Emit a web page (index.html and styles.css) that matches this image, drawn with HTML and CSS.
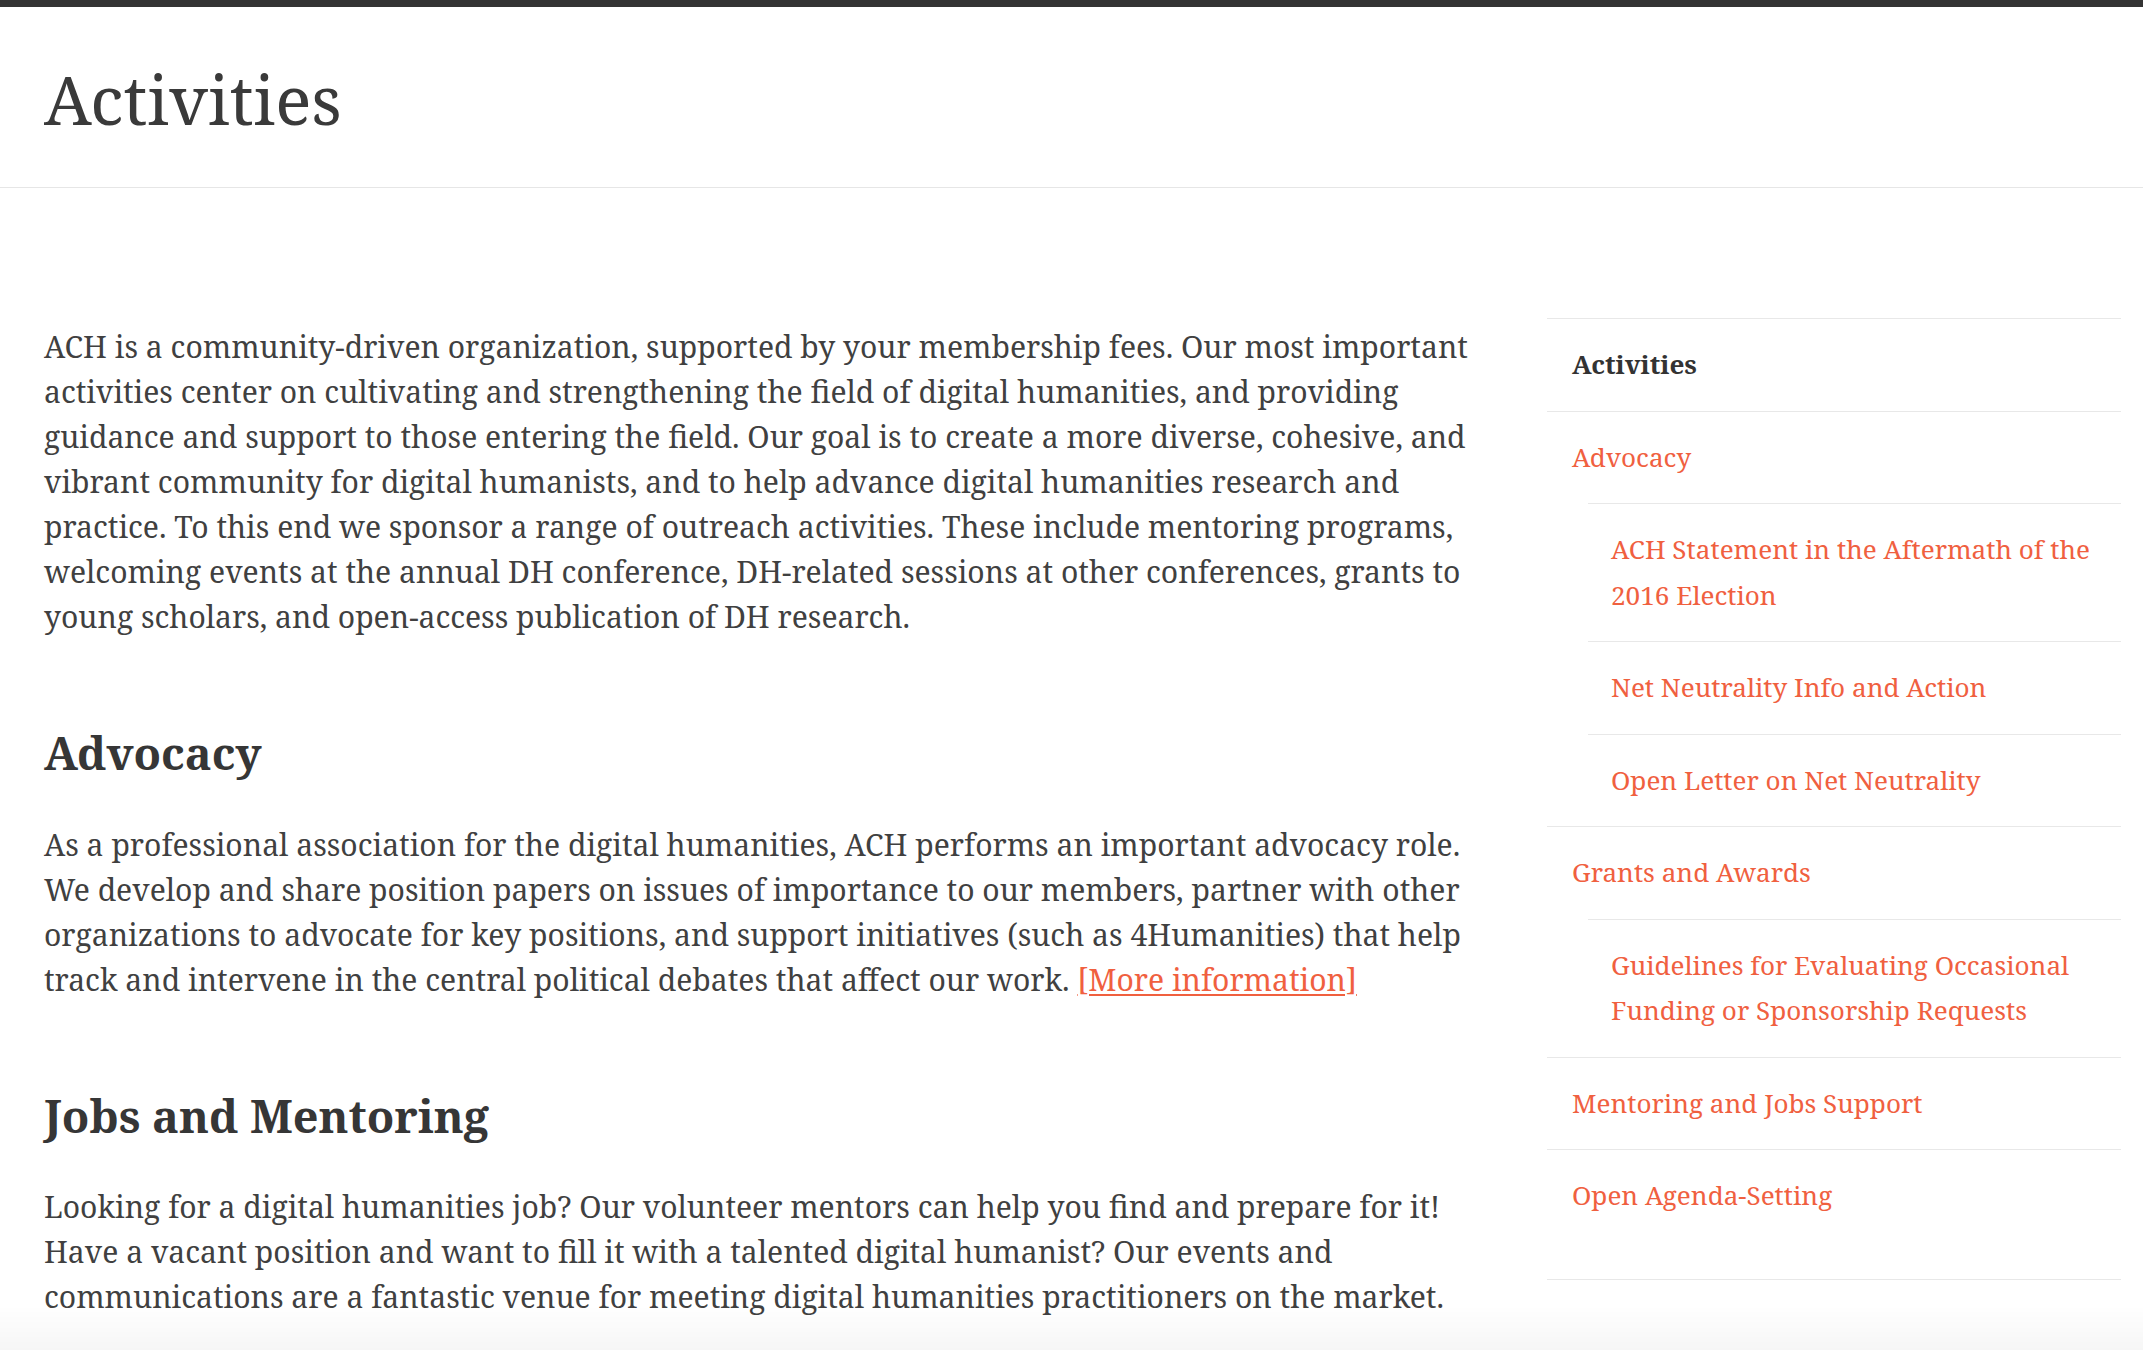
FILE: index.html
```html
<!DOCTYPE html>
<html lang="en">
<head>
<meta charset="utf-8">
<title>Activities</title>
<link rel="stylesheet" href="styles.css">
</head>
<body>
<div class="topbar"></div>
<header class="page-header">
  <h1 class="page-title">Activities</h1>
</header>
<div class="layout">
  <main class="content">
    <p>ACH is a community-driven organization, supported by your membership fees. Our most important activities center on cultivating and strengthening the field of digital humanities, and providing guidance and support to those entering the field. Our goal is to create a more diverse, cohesive, and vibrant community for digital humanists, and to help advance digital humanities research and practice. To this end we sponsor a range of outreach activities. These include mentoring programs, welcoming events at the annual DH conference, DH-related sessions at other conferences, grants to young scholars, and open-access publication of DH research.</p>
    <h2>Advocacy</h2>
    <p>As a professional association for the digital humanities, ACH performs an important advocacy role. We develop and share position papers on issues of importance to our members, partner with other organizations to advocate for key positions, and support initiatives (such as 4Humanities) that help track and intervene in the central political debates that affect our work. <a class="inline-link" href="#">[More information]</a></p>
    <h2>Jobs and Mentoring</h2>
    <p>Looking for a digital humanities job? Our volunteer mentors can help you find and prepare for it! Have a vacant position and want to fill it with a talented digital humanist? Our events and communications are a fantastic venue for meeting digital humanities practitioners on the market.</p>
  </main>
  <aside class="sidebar">
    <nav class="widget">
      <ul class="menu">
        <li class="menu-title">Activities</li>
        <li><a href="#">Advocacy</a>
          <ul class="submenu">
            <li><a href="#">ACH Statement in the Aftermath of the 2016 Election</a></li>
            <li><a href="#">Net Neutrality Info and Action</a></li>
            <li><a href="#">Open Letter on Net Neutrality</a></li>
          </ul>
        </li>
        <li><a href="#">Grants and Awards</a>
          <ul class="submenu">
            <li><a href="#">Guidelines for Evaluating Occasional Funding or Sponsorship Requests</a></li>
          </ul>
        </li>
        <li><a href="#">Mentoring and Jobs Support</a></li>
        <li><a href="#">Open Agenda-Setting</a></li>
      </ul>
    </nav>
  </aside>
</div>
<div class="bottom-fade"></div>
</body>
</html>
```
FILE: styles.css
```css
html, body {
  margin: 0;
  padding: 0;
  background: #ffffff;
}
body {
  font-family: "Noto Serif", "DejaVu Serif", serif;
  color: #3d3d3d;
}
.topbar {
  height: 7px;
  background: #343434;
}
.page-header {
  padding: 52px 44px 47px;
  border-bottom: 1px solid #e6e6e6;
}
.page-title {
  margin: 0;
  font-size: 67.6px;
  line-height: 81px;
  font-weight: 400;
  color: #3a3a3a;
}
.layout {
  display: grid;
  grid-template-columns: 1446px 574px;
  column-gap: 57px;
  padding-left: 44px;
  align-items: start;
}
.content {
  padding-top: 136px;
  padding-bottom: 60px;
}
.content p {
  margin: 0;
  font-size: 30.1px;
  line-height: 45px;
  color: #404040;
}
.content h2 {
  margin: 85px 0 39px;
  font-size: 45px;
  line-height: 1.3;
  font-weight: 700;
  color: #363636;
}
.inline-link {
  color: #f0603f;
  text-decoration: underline;
  text-underline-offset: 3px;
  text-decoration-thickness: 2px;
}
.sidebar {
  padding-top: 130px;
}
.widget {
  border-top: 1px solid #e8e8e8;
  border-bottom: 1px solid #e8e8e8;
  padding-bottom: 37px;
}
.menu, .submenu {
  list-style: none;
  margin: 0;
  padding: 0;
  font-size: 26.1px;
  line-height: 45.5px;
}
.menu > li {
  border-bottom: 1px solid #e8e8e8;
}
.menu > li:last-child {
  border-bottom: none;
}
.menu-title {
  padding: 23px 0 23px 25px;
  font-weight: 700;
  color: #333333;
}
.menu a {
  display: block;
  padding: 23px 20px 23px 25px;
  color: #f0603f;
  text-decoration: none;
}
.submenu {
  margin-left: 41px;
  border-top: 1px solid #e8e8e8;
}
.submenu > li {
  border-bottom: 1px solid #e8e8e8;
}
.submenu > li:last-child {
  border-bottom: none;
}
.submenu a {
  padding-left: 23px;
}
.bottom-fade {
  position: fixed;
  left: 0;
  right: 0;
  bottom: 0;
  height: 45px;
  background: linear-gradient(to bottom, rgba(0,0,0,0), rgba(0,0,0,0.035));
  pointer-events: none;
}
```
